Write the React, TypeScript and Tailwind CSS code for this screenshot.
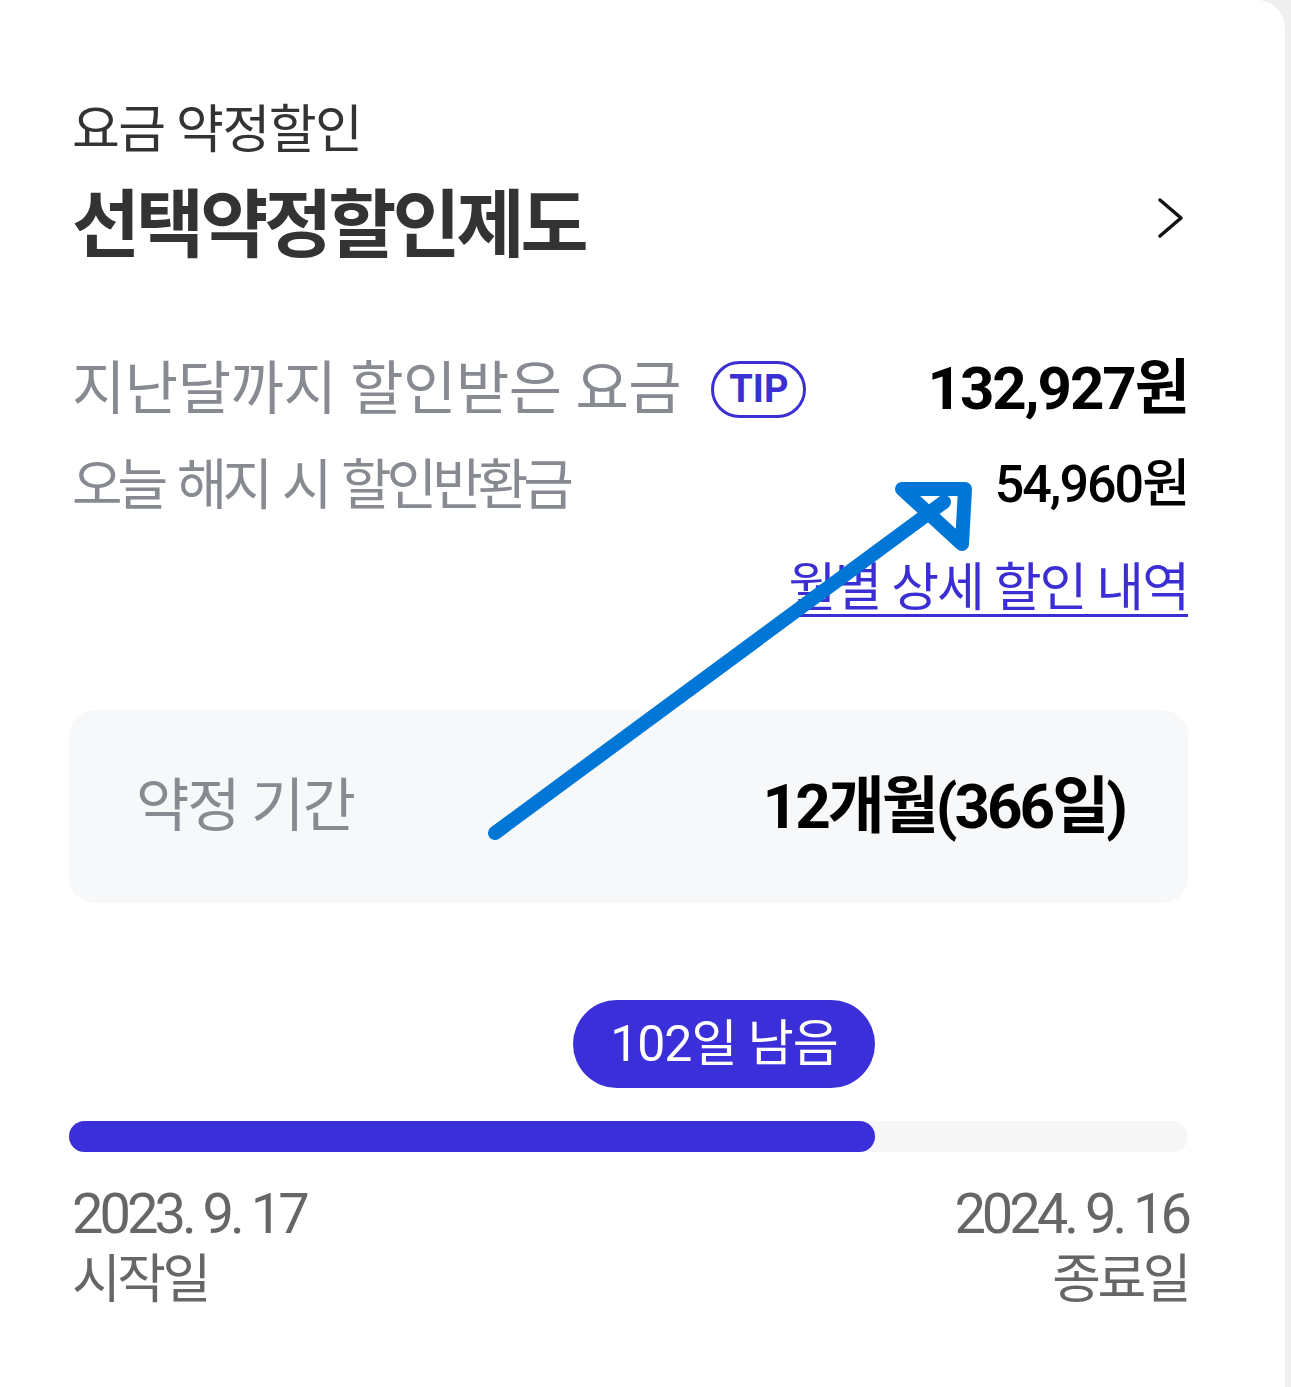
import React from 'react'

const font = { fontFamily: "Roboto, 'Noto Sans CJK KR', 'Noto Sans', sans-serif" }

export default function App() {
  return (
    <div className="w-[1291px] h-[1387px] bg-[#efefef] flex" style={font}>
      <div className="relative w-[1285px] h-full bg-white rounded-tr-[28px] pl-[69px] pr-[97px] pt-[96px]">
        {/* header */}
        <div className="text-[52px] leading-[70px] text-[#333] pl-[3px] tracking-[-1.5px]">요금 약정할인</div>
        <div className="flex items-center justify-between mt-[15px]">
          <h1 className="text-[74px] leading-[90px] font-bold text-[#333] pl-[3px] tracking-[-4px]">선택약정할인제도</h1>
          <svg width="30" height="42" viewBox="0 0 30 42" className="mr-[2px] -mt-[16px]">
            <path d="M4 3 L25 21 L4 39" fill="none" stroke="#111" strokeWidth="3.5" strokeLinecap="round" strokeLinejoin="round" />
          </svg>
        </div>

        {/* discount amounts */}
        <div className="mt-[83px] flex items-center justify-between">
          <div className="flex items-center">
            <span className="text-[58px] leading-[70px] text-[#878b91] pl-[3px] tracking-[-0.5px]">지난달까지 할인받은 요금</span>
            <span className="ml-[30px] h-[57px] px-[15px] rounded-full border-[3px] border-[#3b2fd4] text-[#3b2fd4] font-bold text-[38px] leading-none flex items-center">TIP</span>
          </div>
          <span className="text-[60px] leading-[70px] font-bold text-black tracking-[-2px]">132,927원</span>
        </div>
        <div className="mt-[31px] flex items-center justify-between">
          <span className="text-[55px] leading-[60px] text-[#878b91] pl-[3px] tracking-[-5px] [word-spacing:5px]">오늘 해지 시 할인반환금</span>
          <span className="text-[52px] leading-[60px] font-medium text-black tracking-[-2px]">54,960원</span>
        </div>
        <div className="mt-[43px] flex justify-end">
          <a className="text-[52px] leading-[62px] text-[#3b2fd4] underline underline-offset-[8px] decoration-[3px] tracking-[-2px]">월별 상세 할인 내역</a>
        </div>

        {/* contract period */}
        <div className="mt-[90px] h-[193px] rounded-[26px] bg-[#f7f8f9] flex items-center justify-between pl-[67px] pr-[63px]">
          <span className="text-[58px] text-[#878b91] tracking-[-2px]">약정 기간</span>
          <span className="text-[62px] font-bold text-black tracking-[-3px]">12개월(366일)</span>
        </div>

        {/* progress */}
        <div className="mt-[97px] flex pl-[504px]">
          <div className="h-[88px] w-[302px] rounded-full bg-[#3b2fd9] text-white text-[50px] flex items-center justify-center tracking-[-1px]">102일 남음</div>
        </div>
        <div className="mt-[33px] h-[31px] rounded-full bg-[#f6f6f7]">
          <div className="h-full w-[806px] rounded-full bg-[#3b2fd9]" />
        </div>
        <div className="mt-[29px] flex justify-between text-[#666]">
          <div className="flex flex-col items-start">
            <span className="text-[56px] leading-[66px] tracking-[-4px] pl-[3px]">2023. 9. 17</span>
            <span className="text-[53px] leading-[66px] tracking-[-3.5px] pl-[3px]">시작일</span>
          </div>
          <div className="flex flex-col items-end">
            <span className="text-[56px] leading-[66px] tracking-[-4px]">2024. 9. 16</span>
            <span className="text-[53px] leading-[66px] tracking-[-3.5px]">종료일</span>
          </div>
        </div>

        {/* annotation arrow */}
        <svg className="absolute left-0 top-0 pointer-events-none" width="1285" height="1387">
          <g fill="none" stroke="#0077d6" strokeWidth="14" strokeLinecap="round" strokeLinejoin="round">
            <path d="M495 833 L944 502" />
            <path d="M902 489 L965 489 L962 544 Z" />
          </g>
        </svg>
      </div>
    </div>
  )
}
